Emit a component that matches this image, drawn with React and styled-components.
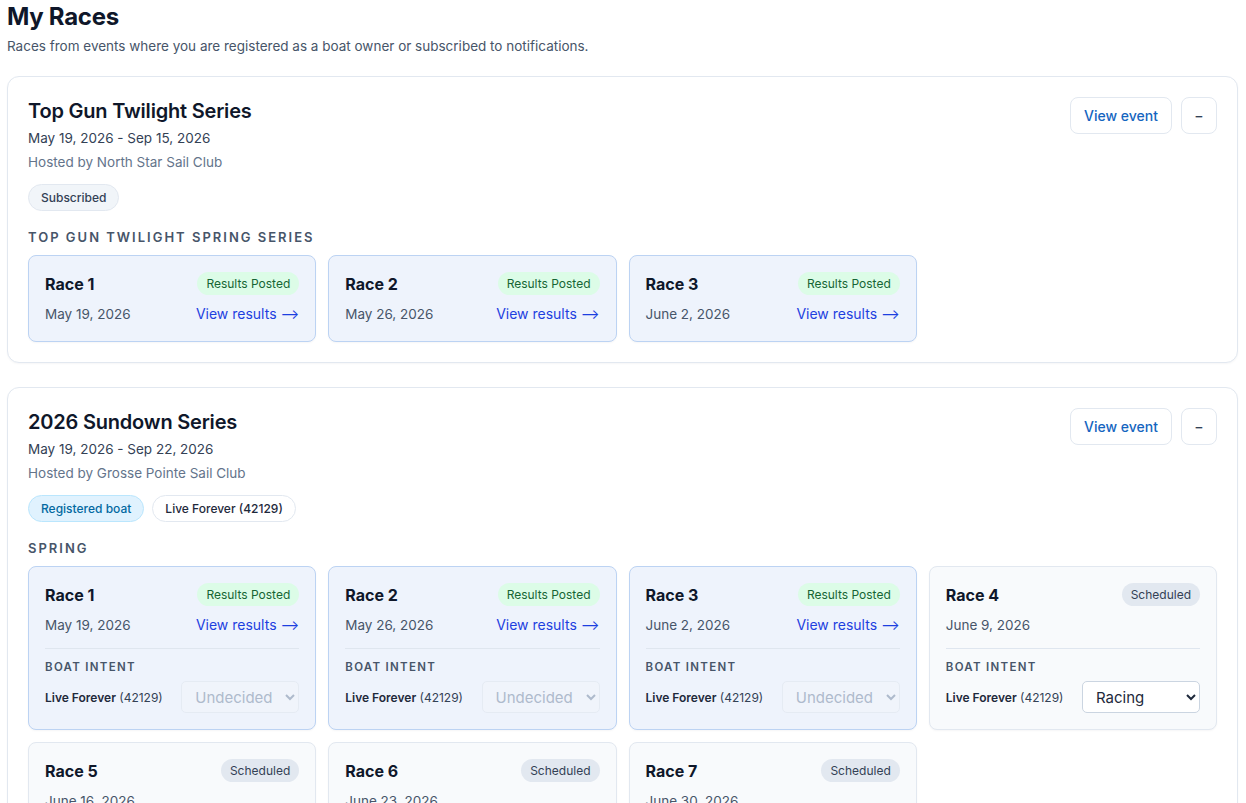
import React from 'react'
import styled, { createGlobalStyle } from 'styled-components'

const GlobalStyle = createGlobalStyle`
  body {
    margin: 0;
    background: #ffffff;
    font-family: Inter, "Noto Sans", "Liberation Sans", sans-serif;
    color: #0f172a;
  }
`

const Page = styled.div`
  padding: 0 8px 24px 7px;
`

const PageTitle = styled.h1`
  margin: 0;
  font-size: 24px;
  line-height: 34px;
  font-weight: 700;
  letter-spacing: -0.3px;
`

const PageSub = styled.p`
  margin: 2px 0 20px;
  font-size: 13.5px;
  line-height: 20px;
  color: #475569;
`

const EventList = styled.div`
  display: flex;
  flex-direction: column;
  gap: 24px;
`

const EventCard = styled.section`
  border: 1px solid #e2e8f0;
  border-radius: 12px;
  padding: 20px;
  background: #fff;
  box-shadow: 0 1px 2px rgba(15, 23, 42, 0.04);
`

const EventHeader = styled.div`
  display: flex;
  justify-content: space-between;
  align-items: flex-start;
`

const EventTitle = styled.h2`
  margin: 0;
  font-size: 20px;
  line-height: 28px;
  font-weight: 600;
  letter-spacing: -0.2px;
`

const Meta = styled.div`
  margin-top: ${p => (p.muted ? 4 : 3)}px;
  font-size: 13.5px;
  line-height: 20px;
  color: ${p => (p.muted ? '#64748b' : '#334155')};
`

const Actions = styled.div`
  display: flex;
  gap: 9px;
`

const Button = styled.button`
  height: 37px;
  min-width: 36px;
  padding: 0 ${p => (p.square ? '0' : '13px')};
  border: 1px solid #e2e8f0;
  border-radius: 8px;
  background: #fff;
  color: ${p => (p.square ? '#334155' : '#1565c0')};
  font-family: inherit;
  font-size: 14px;
  font-weight: 500;
  cursor: pointer;
`

const Badges = styled.div`
  display: flex;
  gap: 8px;
  margin-top: 12px;
`

const Badge = styled.span`
  display: inline-block;
  padding: 4px 12px;
  font-size: 12px;
  line-height: 17px;
  font-weight: 500;
  border-radius: 999px;
  border: 1px solid ${p => p.border};
  background: ${p => p.bg};
  color: ${p => p.color};
`

const SeriesHeading = styled.h3`
  margin: 17px 0 9px;
  font-size: 13px;
  line-height: 18px;
  font-weight: 600;
  letter-spacing: 2px;
  text-transform: uppercase;
  color: #475569;
`

const RaceGrid = styled.div`
  display: grid;
  grid-template-columns: repeat(4, 1fr);
  gap: 12px;
`

const RaceCard = styled.div`
  border: 1px solid ${p => (p.done ? '#bcd3f3' : '#e2e8f0')};
  background: ${p => (p.done ? '#eef3fc' : '#f8fafc')};
  border-radius: 8px;
  padding: 16px;
  box-shadow: 0 1px 2px rgba(15, 23, 42, 0.04);
`

const Row = styled.div`
  display: flex;
  justify-content: space-between;
  align-items: center;
  margin-top: ${p => p.mt || 0}px;
`

const RaceName = styled.div`
  font-size: 16px;
  font-weight: 700;
  line-height: 22px;
`

const Status = styled.span`
  padding: 3px 9px;
  font-size: 12px;
  line-height: 17px;
  border-radius: 999px;
  background: ${p => (p.done ? '#dcfce7' : '#e2e8f0')};
  color: ${p => (p.done ? '#166534' : '#334155')};
`

const RaceDate = styled.div`
  font-size: 13.5px;
  line-height: 22px;
  color: #475569;
`

const ResultsLink = styled.a`
  font-size: 14px;
  line-height: 22px;
  color: #1d3fe0;
  text-decoration: none;
`

const Intent = styled.div`
  margin-top: 12px;
  padding-top: 10px;
  border-top: 1px solid #dfe6ef;
`

const IntentLabel = styled.div`
  font-size: 11.5px;
  line-height: 16px;
  font-weight: 600;
  letter-spacing: 1.3px;
  text-transform: uppercase;
  color: #475569;
  margin-bottom: 6px;
`

const BoatName = styled.span`
  font-size: 12px;
  color: #334155;
  b {
    font-weight: 600;
    color: #1e293b;
  }
`

const Select = styled.select`
  width: 118px;
  height: 32px;
  padding: 0 4px 0 9px;
  font-family: inherit;
  font-size: 15px;
  border-radius: 5px;
  border: 1px solid ${p => (p.disabled ? '#e2e8f0' : '#cbd5e1')};
  background: ${p => (p.disabled ? '#f1f5fb' : '#fff')};
  color: ${p => (p.disabled ? '#94a3b8' : '#1e293b')};
`

const events = [
  {
    title: 'Top Gun Twilight Series',
    dates: 'May 19, 2026 - Sep 15, 2026',
    host: 'North Star Sail Club',
    badges: [{ label: 'Subscribed', bg: '#f1f5f9', border: '#e2e8f0', color: '#334155' }],
    series: 'Top Gun Twilight Spring Series',
    intent: false,
    races: [
      { name: 'Race 1', date: 'May 19, 2026', done: true },
      { name: 'Race 2', date: 'May 26, 2026', done: true },
      { name: 'Race 3', date: 'June 2, 2026', done: true },
    ],
  },
  {
    title: '2026 Sundown Series',
    dates: 'May 19, 2026 - Sep 22, 2026',
    host: 'Grosse Pointe Sail Club',
    badges: [
      { label: 'Registered boat', bg: '#e0f2fe', border: '#bae6fd', color: '#0369a1' },
      { label: 'Live Forever (42129)', bg: '#fff', border: '#e2e8f0', color: '#1e293b' },
    ],
    series: 'Spring',
    intent: true,
    races: [
      { name: 'Race 1', date: 'May 19, 2026', done: true, choice: 'Undecided' },
      { name: 'Race 2', date: 'May 26, 2026', done: true, choice: 'Undecided' },
      { name: 'Race 3', date: 'June 2, 2026', done: true, choice: 'Undecided' },
      { name: 'Race 4', date: 'June 9, 2026', done: false, choice: 'Racing' },
      { name: 'Race 5', date: 'June 16, 2026', done: false, choice: 'Undecided' },
      { name: 'Race 6', date: 'June 23, 2026', done: false, choice: 'Undecided' },
      { name: 'Race 7', date: 'June 30, 2026', done: false, choice: 'Undecided' },
    ],
  },
]

const Race = ({ race, intent }) => (
  <RaceCard done={race.done}>
    <Row>
      <RaceName>{race.name}</RaceName>
      <Status done={race.done}>{race.done ? 'Results Posted' : 'Scheduled'}</Status>
    </Row>
    <Row mt={8}>
      <RaceDate>{race.date}</RaceDate>
      {race.done && <ResultsLink href="#">View results ⟶</ResultsLink>}
    </Row>
    {intent && (
      <Intent>
        <IntentLabel>Boat intent</IntentLabel>
        <Row>
          <BoatName><b>Live Forever</b> (42129)</BoatName>
          <Select disabled={race.done} defaultValue={race.choice}>
            <option>Undecided</option>
            <option>Racing</option>
            <option>Not racing</option>
          </Select>
        </Row>
      </Intent>
    )}
  </RaceCard>
)

const App = () => (
  <Page>
    <GlobalStyle />
    <PageTitle>My Races</PageTitle>
    <PageSub>Races from events where you are registered as a boat owner or subscribed to notifications.</PageSub>
    <EventList>
      {events.map(ev => (
        <EventCard key={ev.title}>
          <EventHeader>
            <div>
              <EventTitle>{ev.title}</EventTitle>
              <Meta>{ev.dates}</Meta>
              <Meta muted>Hosted by {ev.host}</Meta>
            </div>
            <Actions>
              <Button>View event</Button>
              <Button square>−</Button>
            </Actions>
          </EventHeader>
          <Badges>
            {ev.badges.map(b => (
              <Badge key={b.label} bg={b.bg} border={b.border} color={b.color}>{b.label}</Badge>
            ))}
          </Badges>
          <SeriesHeading>{ev.series}</SeriesHeading>
          <RaceGrid>
            {ev.races.map(r => <Race key={r.name} race={r} intent={ev.intent} />)}
          </RaceGrid>
        </EventCard>
      ))}
    </EventList>
  </Page>
)

export default App
